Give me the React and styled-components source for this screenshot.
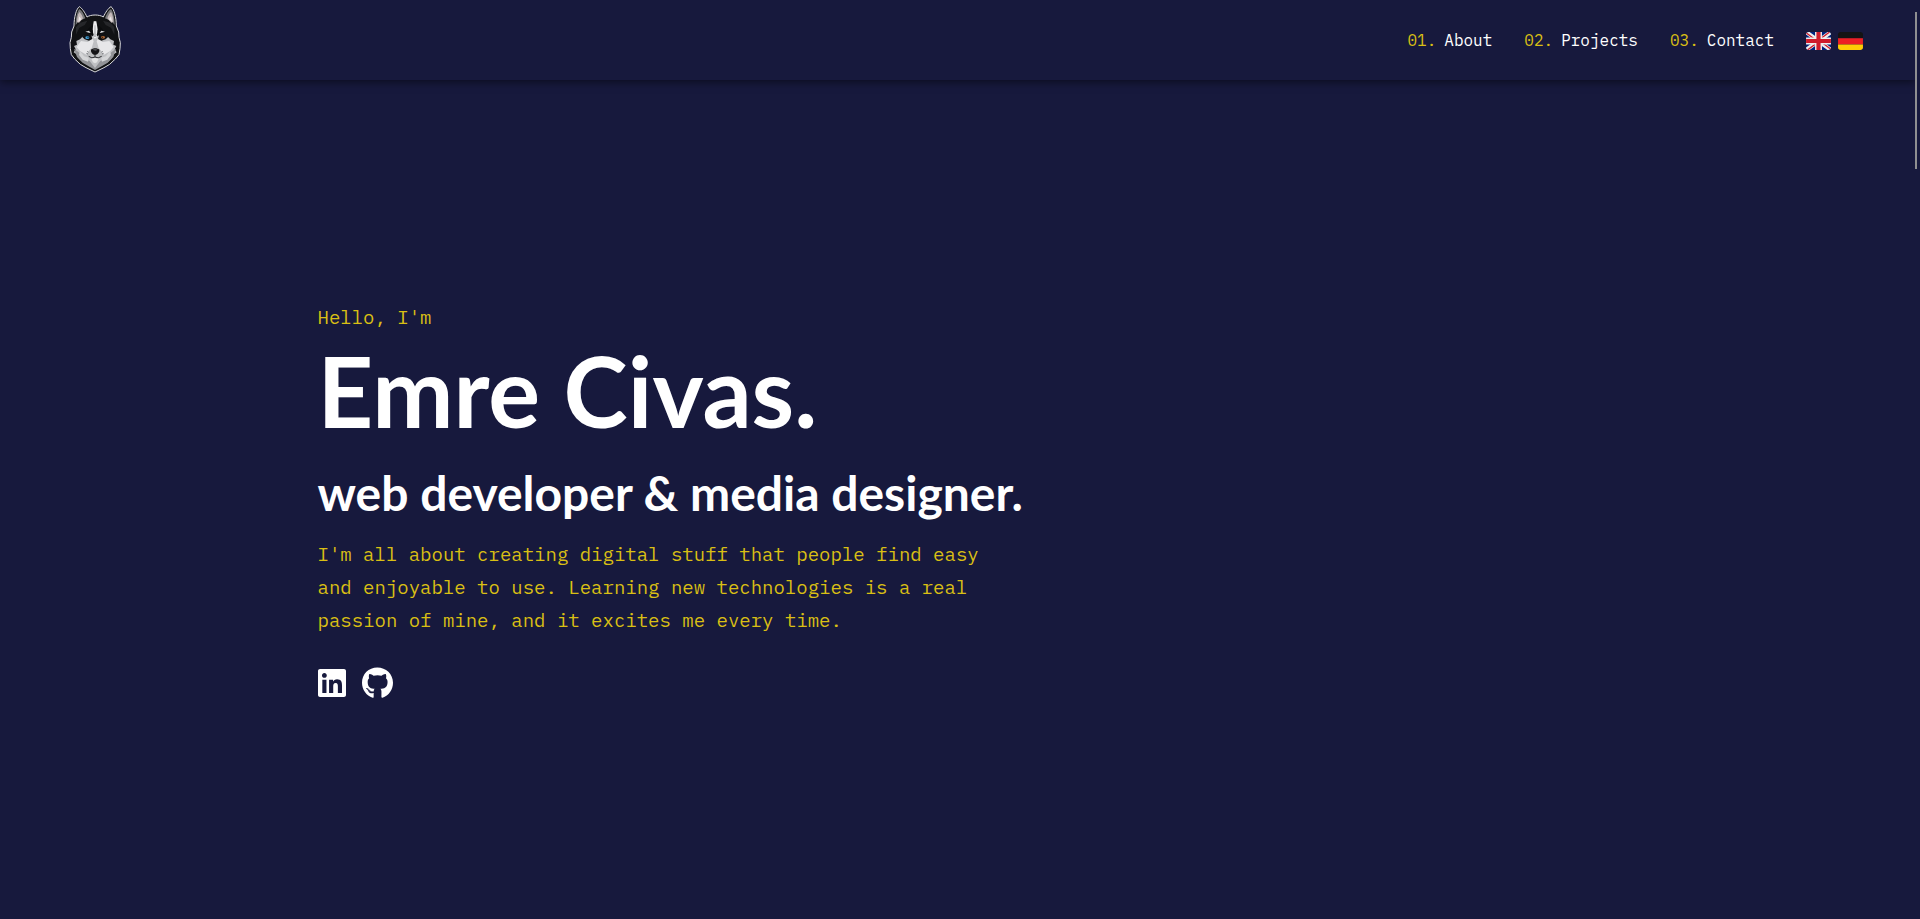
import React from "react";
import styled, { createGlobalStyle } from "styled-components";
import { FaGithub, FaLinkedin } from "react-icons/fa";

const colors = { navy: "#17193d", yellow: "#d9bf14", white: "#ffffff" };
const mono = '"IBM Plex Mono", "Liberation Mono", monospace';

const GlobalStyle = createGlobalStyle`
  *, *::before, *::after { box-sizing: border-box; }
  body { margin: 0; background: ${colors.navy}; color: ${colors.white}; font-family: ${mono}; }
  h1, h2, p, ul { margin: 0; padding: 0; }
  a { color: inherit; text-decoration: none; }
`;

const Page = styled.div`
  display: flex;
  flex-direction: column;
  min-height: 100vh;
  padding-right: 5px;
`;

const Header = styled.header`
  display: flex;
  align-items: center;
  justify-content: space-between;
  height: 80px;
  padding: 0 52px 0 68px;
  box-shadow: 0 2px 8px rgba(0, 0, 0, 0.5);
  clip-path: inset(0 0 -16px 0);
`;

const LogoLink = styled.a`
  display: flex;
  padding-bottom: 2px;
`;

const Nav = styled.nav`
  display: flex;
  align-items: center;
  gap: 32px;
`;

const NavList = styled.ul`
  display: flex;
  gap: 32px;
  list-style: none;
`;

const NavLink = styled.a`
  display: flex;
  gap: 8px;
  font-size: 16px;
  line-height: 24px;
`;

const NavNumber = styled.span`
  color: ${colors.yellow};
`;

const Languages = styled.div`
  display: flex;
  gap: 7px;
  padding-top: 2px;
`;

const FlagButton = styled.button`
  display: flex;
  padding: 0;
  border: 0;
  background: none;
  cursor: pointer;
`;

const Hero = styled.main`
  flex: 1;
  display: flex;
  align-items: center;
`;

const HeroContent = styled.section`
  width: 100%;
  max-width: 1280px;
  margin: 0 auto;
`;

const Text = styled.p`
  max-width: 700px;
  color: ${colors.yellow};
  font-size: 19px;
  line-height: 33px;
`;

const Name = styled.h1`
  font: 700 97px/114px Lato, sans-serif;
`;

const Role = styled.h2`
  margin: 16px 0;
  font: 700 48px/58px Lato, sans-serif;
`;

const Socials = styled.div`
  display: flex;
  align-items: center;
  gap: 16px;
  margin-top: 30px;
`;

const SocialLink = styled.a`
  display: flex;

  svg {
    width: ${(p) => p.$width}px;
    height: 32px;
  }
`;

const ScrollThumb = styled.div`
  position: fixed;
  top: 12px;
  right: 3px;
  width: 2px;
  height: 157px;
  background: #8f8f91;
`;

function HuskyLogo() {
  return (
    <svg width="54" height="68" viewBox="24 15 162 204" aria-hidden="true">
      <path
        d="M58 20C49 26 42 52 42 78L35 96L34 112L30 128L31 146L34 164L44 177L61 193L78 203L105 216L132 203L149 193L166 177L177 164L180 146L181 128L177 112L176 96L169 78C169 52 162 26 153 20C145 24 136 38 130 51C118 43 93 43 81 51C75 38 66 24 58 20Z"
        fill="#111214" stroke="#dcdcdf" strokeWidth="3" strokeLinejoin="round"
      />
      <path d="M58 27C51 36 47 56 47 75L56 64L76 55C72 43 66 32 58 27Z" fill="#77777a" />
      <path d="M58 36C53 44 51 56 51 66L57 68L69 55C67 47 63 40 58 36Z" fill="#c5babb" />
      <path d="M58 49L55 65L64 58Z" fill="#ece9e9" />
      <path d="M153 27C160 36 164 56 164 75L155 64L135 55C139 43 145 32 153 27Z" fill="#77777a" />
      <path d="M153 36C158 44 160 56 160 66L154 68L142 55C144 47 148 40 153 36Z" fill="#c5babb" />
      <path d="M153 49L156 65L147 58Z" fill="#ece9e9" />
      <path d="M48 82L60 68L82 62L74 75L58 83L48 104ZM163 82L151 68L129 62L137 75L153 83L163 104Z" fill="#26272a" />
      <path
        d="M60 118L72 106L84 103L94 109L99 94L101 72L105 62L109 72L112 94L117 109L127 103L139 106L151 118L162 123L160 134L169 138L164 148L170 157L159 164L154 176L143 187L126 193L105 207L84 193L68 187L57 176L52 164L41 157L47 148L42 138L51 134L49 123Z"
        fill="#bfc0c3"
      />
      <path d="M63 123L84 126L96 113L101 124L95 145L79 164L60 153L50 141ZM148 123L127 126L115 113L110 124L116 145L132 164L151 153L161 141Z" fill="#e7e7e9" />
      <path d="M101 64L98 88L102 115L109 115L113 88L109 64Z" fill="#eeeeef" />
      <path d="M104 76L103 111L107 111L106 76Z" fill="#9ea0a3" />
      <path d="M96 76L86 85L77 97L92 103L98 109L101 105L98 94ZM115 76L125 85L134 97L119 103L113 109L110 105L113 94Z" fill="#0b0c0e" />
      <path d="M76 95L87 92L92 99L87 98ZM135 95L124 92L119 99L124 98Z" fill="#dadadc" />
      <path d="M66 110L74 102L85 101L94 106L97 117L87 122L74 118ZM145 110L137 102L126 101L117 106L114 117L124 122L137 118Z" fill="#101113" />
      <ellipse cx="82" cy="113" rx="6" ry="4" fill="#3f9fd6" />
      <ellipse cx="129" cy="112" rx="6" ry="4" fill="#a5602f" />
      <circle cx="84" cy="112" r="2" fill="#0b1b27" />
      <circle cx="127" cy="112" r="2" fill="#27160e" />
      <path d="M42 146L58 158L70 176L89 183L105 204L121 183L140 176L152 158L168 146L160 171L142 189L105 210L69 189L51 171Z" fill="#929397" />
      <path d="M60 153L72 169L86 173L84 185L68 179L57 165ZM150 153L138 169L124 173L126 185L142 179L153 165Z" fill="#d4d5d7" />
      <path d="M92 146L84 157L80 166L92 172L105 168L118 172L130 166L126 157L118 146Z" fill="#bfc0c2" />
      <path d="M93 149C99 143 112 143 118 149C119 157 112 164 105 165C98 164 92 157 93 149Z" fill="#141416" />
      <path d="M97 149C103 146 108 146 113 149L107 152Z" fill="#525257" />
      <path d="M105 164L105 171M86 169Q96 177 105 171Q114 177 125 169" fill="none" stroke="#292a2d" strokeWidth="3" />
      <path d="M94 176L105 174L116 176L111 187L105 190L99 187Z" fill="#e2e2e3" />
      <path d="M82 153L85 157M79 160L84 162M128 153L125 157M131 160L126 162" stroke="#55565a" strokeWidth="2" />
    </svg>
  );
}

function BritishFlag() {
  return (
    <svg width="25" height="18" viewBox="0 0 36 26" aria-hidden="true">
      <clipPath id="uk-shape"><rect width="36" height="26" rx="4" /></clipPath>
      <g clipPath="url(#uk-shape)">
        <rect width="36" height="26" fill="#00247d" />
        <path d="M0 0L36 26M36 0L0 26" stroke="#eeeeee" strokeWidth="6" />
        <path d="M0 1L16 13M36 25L20 13M34 0L18 12M2 26L18 14" stroke="#cf1b2b" strokeWidth="2" />
        <path d="M18 0V26M0 13H36" stroke="#eeeeee" strokeWidth="10" />
        <path d="M18 0V26M0 13H36" stroke="#cf1b2b" strokeWidth="6" />
      </g>
    </svg>
  );
}

function GermanFlag() {
  return (
    <svg width="25" height="18" viewBox="0 0 36 26" aria-hidden="true">
      <path d="M4 0H32A4 4 0 0 1 36 4V9H0V4A4 4 0 0 1 4 0Z" fill="#141414" />
      <path d="M0 9H36V18H0Z" fill="#ed1f24" />
      <path d="M0 18H36V22A4 4 0 0 1 32 26H4A4 4 0 0 1 0 22Z" fill="#ffcd05" />
    </svg>
  );
}

const links = ["About", "Projects", "Contact"];

export default function App() {
  return (
    <>
      <GlobalStyle />
      <Page>
        <Header>
          <LogoLink href="#home" aria-label="Home"><HuskyLogo /></LogoLink>
          <Nav>
            <NavList>
              {links.map((label, i) => (
                <li key={label}>
                  <NavLink href={`#${label.toLowerCase()}`}>
                    <NavNumber>0{i + 1}.</NavNumber>
                    <span>{label}</span>
                  </NavLink>
                </li>
              ))}
            </NavList>
            <Languages>
              <FlagButton type="button" aria-label="English"><BritishFlag /></FlagButton>
              <FlagButton type="button" aria-label="Deutsch"><GermanFlag /></FlagButton>
            </Languages>
          </Nav>
        </Header>
        <Hero id="home">
          <HeroContent>
            <Text>Hello, I'm</Text>
            <Name>Emre Civas.</Name>
            <Role>web developer &amp; media designer.</Role>
            <Text>
              I'm all about creating digital stuff that people find easy and enjoyable to use. Learning new
              technologies is a real passion of mine, and it excites me every time.
            </Text>
            <Socials>
              <SocialLink $width={28} href="#linkedin" aria-label="LinkedIn"><FaLinkedin /></SocialLink>
              <SocialLink $width={31} href="#github" aria-label="GitHub"><FaGithub /></SocialLink>
            </Socials>
          </HeroContent>
        </Hero>
      </Page>
      <ScrollThumb />
    </>
  );
}
